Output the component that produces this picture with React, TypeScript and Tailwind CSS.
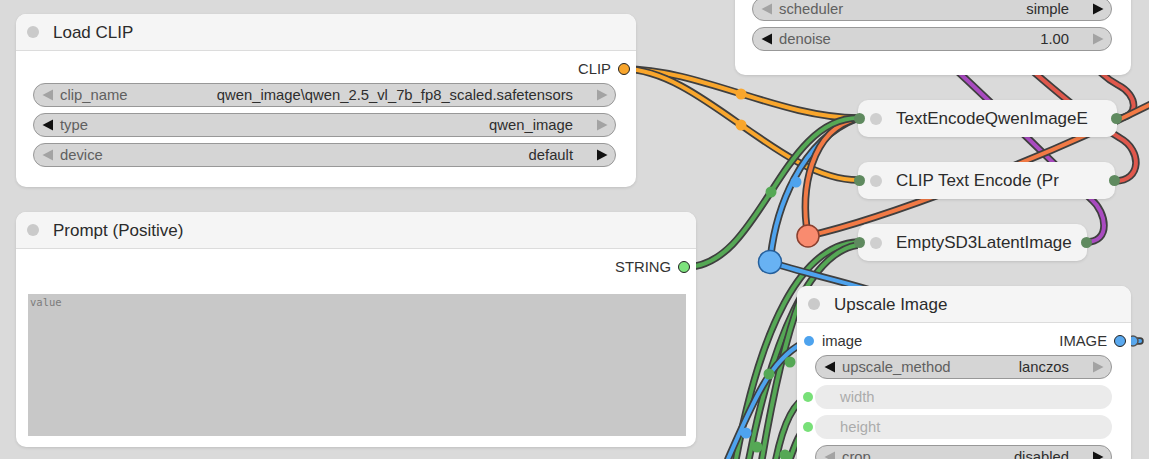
import React from "react";

const FONT = "font-['Liberation_Sans',Arial,sans-serif]";

function Tri({ dir, active }: { dir: "l" | "r"; active: boolean }) {
  return (
    <svg width="12" height="12" viewBox="0 0 12 12" className="shrink-0">
      {dir === "l" ? (
        <polygon points="11,0.5 11,11.5 0.5,6" fill={active ? "#111111" : "#a3a3a3"} />
      ) : (
        <polygon points="1,0.5 1,11.5 11.5,6" fill={active ? "#111111" : "#a3a3a3"} />
      )}
    </svg>
  );
}

function Combo({ label, value, l, r }: { label: string; value: string; l: boolean; r: boolean }) {
  return (
    <div className="flex h-[24px] items-center rounded-full border border-[#989898] bg-[#d5d5d5] pl-[8px] pr-[7px] text-[14.8px] leading-none">
      <Tri dir="l" active={l} />
      <span className="ml-[6px] text-[#606060]">{label}</span>
      <span className="ml-auto text-[#2e2e2e]">{value}</span>
      <span className="ml-[23px]">
        <Tri dir="r" active={r} />
      </span>
    </div>
  );
}

function Header({ title }: { title: string }) {
  return (
    <div className="flex h-[37px] items-center border-b border-[#dcdcdc] bg-[#f5f5f5] pl-[11px]">
      <div className="h-[12px] w-[12px] rounded-full bg-[#cacaca]" />
      <div className="ml-[14px] pt-[2px] text-[17px] text-[#2b2b2b]">{title}</div>
    </div>
  );
}

function OutRow({ label, color }: { label: string; color: string }) {
  return (
    <div className="flex h-[20px] items-center justify-end pr-[6px] text-[14.8px] text-[#333]">
      <span>{label}</span>
      <span
        className="ml-[7px] h-[12px] w-[12px] rounded-full border-[1.5px] border-[#222]"
        style={{ background: color }}
      />
    </div>
  );
}

function Collapsed({ title, w, top }: { title: string; w: string; top: string }) {
  return (
    <div
      className={`absolute left-[858px] ${top} ${w} h-[37px] rounded-[10px] bg-[#f4f4f4] shadow-[0_1px_3px_rgba(0,0,0,0.12)]`}
    >
      <div className="flex h-full items-center overflow-hidden pl-[12px]">
        <div className="h-[12px] w-[12px] shrink-0 rounded-full bg-[#cfcfcf]" />
        <div className="ml-[14px] whitespace-nowrap pt-[1px] text-[17px] text-[#2b2b2b]">{title}</div>
      </div>
      <div className="absolute left-[-4px] top-[13px] h-[11px] w-[11px] rounded-full bg-[#5f8a5f]" />
      <div className="absolute right-[-5px] top-[13px] h-[11px] w-[11px] rounded-full bg-[#5f8a5f]" />
    </div>
  );
}

const wires: { d: string; c: string }[] = [
  // purple latent
  { d: "M1086,242 C1112,242 1106,212 1092,200 C1060,170 1000,110 940,55", c: "#a94bc0" },
  // red conditioning
  { d: "M1115,181 C1142,181 1142,150 1120,138 C1090,120 1060,95 1020,60", c: "#e0584c" },
  { d: "M1117,118 C1140,118 1138,95 1118,85 C1105,78 1100,72 1090,60", c: "#e0584c" },
  // salmon line to the right
  { d: "M808,236 C880,220 1040,160 1149,105", c: "#f27a45" },
  // orange CLIP
  { d: "M624,69 C700,69 780,118 858,118", c: "#f9a62c" },
  { d: "M624,69 C700,69 780,180 858,180", c: "#f9a62c" },
  // green lines from bottom
  { d: "M736,459 C760,330 800,245 858,242", c: "#55a855" },
  { d: "M749,459 C772,340 810,252 858,245", c: "#55a855" },
  { d: "M762,459 C772,400 785,340 800,300", c: "#55a855" },
  { d: "M776,459 C782,430 792,402 808,397", c: "#55a855" },
  { d: "M790,459 C795,445 800,430 808,427", c: "#55a855" },
  // blue
  { d: "M728,459 C750,410 770,355 808,341", c: "#4ea3ee" },
  { d: "M770,262 C800,272 830,278 870,290", c: "#4ea3ee" },
  { d: "M770,262 C775,210 800,140 858,118", c: "#4ea3ee" },
  { d: "M1120,341 L1140,341", c: "#4ea3ee" },
  // salmon up
  { d: "M808,236 C800,190 810,130 858,118", c: "#f27a45" },
  // green STRING
  { d: "M686,267 C760,267 780,118 858,118", c: "#55a855" },
];

const dots: { x: number; y: number; c: string }[] = [
  { x: 741, y: 94, c: "#f9a62c" },
  { x: 741, y: 125, c: "#f9a62c" },
  { x: 771, y: 192, c: "#55a855" },
  { x: 796, y: 182, c: "#4ea3ee" },
  { x: 769, y: 374, c: "#55a855" },
  { x: 790, y: 362, c: "#55a855" },
  { x: 746, y: 433, c: "#4ea3ee" },
  { x: 757, y: 447, c: "#55a855" },
  { x: 785, y: 455, c: "#55a855" },
];

export default function App() {
  return (
    <div className={`relative h-[459px] w-[1149px] overflow-hidden bg-[#dadada] ${FONT}`}>
      <svg className="absolute left-0 top-0" width="1149" height="459">
        {wires.map((w, i) => (
          <g key={i}>
            <path d={w.d} stroke="#3f3f3f" strokeWidth={7.5} fill="none" strokeLinecap="round" />
            <path d={w.d} stroke={w.c} strokeWidth={4} fill="none" strokeLinecap="round" />
          </g>
        ))}
        {dots.map((p, i) => (
          <circle key={i} cx={p.x} cy={p.y} r={5.5} fill={p.c} />
        ))}
        <circle cx={1133} cy={341} r={5} fill="#5aa9ef" stroke="#555" strokeWidth={1.5} />
        <circle cx={808} cy={236} r={11} fill="#f98b6f" stroke="#8a3f2e" strokeWidth={1.5} />
        <circle cx={770} cy={262} r={11.5} fill="#68b2f3" stroke="#245f9c" strokeWidth={1.5} />
      </svg>

      {/* Load CLIP */}
      <div className="absolute left-[16px] top-[14px] w-[620px] overflow-hidden rounded-[10px] bg-white shadow-[0_1px_3px_rgba(0,0,0,0.12)]">
        <Header title="Load CLIP" />
        <div className="pb-[20px] pt-[8px]">
          <OutRow label="CLIP" color="#f8a52c" />
          <div className="ml-[17px] mr-[20px] mt-[4px] flex flex-col gap-[6px]">
            <Combo label="clip_name" value="qwen_image\qwen_2.5_vl_7b_fp8_scaled.safetensors" l={false} r={false} />
            <Combo label="type" value="qwen_image" l={true} r={false} />
            <Combo label="device" value="default" l={false} r={true} />
          </div>
        </div>
      </div>

      {/* Prompt */}
      <div className="absolute left-[16px] top-[212px] flex h-[235px] w-[680px] flex-col overflow-hidden rounded-[10px] bg-white shadow-[0_1px_3px_rgba(0,0,0,0.12)]">
        <Header title="Prompt (Positive)" />
        <div className="flex flex-1 flex-col pb-[11px] pt-[8px]">
          <OutRow label="STRING" color="#7de27d" />
          <div className="ml-[12px] mr-[10px] mt-[17px] flex-1 bg-[#c8c8c8] px-[2px] pt-[1px] font-['DejaVu_Sans_Mono',monospace] text-[10.5px] leading-[14px] text-[#7c7c7c]">
            value
          </div>
        </div>
      </div>

      {/* KSampler (partial) */}
      <div className="absolute left-[735px] top-[-50px] h-[125px] w-[396px] rounded-[10px] bg-white shadow-[0_1px_3px_rgba(0,0,0,0.12)]">
        <div className="ml-[17px] mr-[19px] mt-[47px] flex flex-col gap-[6px]">
          <Combo label="scheduler" value="simple" l={false} r={true} />
          <Combo label="denoise" value="1.00" l={true} r={false} />
        </div>
      </div>

      <Collapsed title="TextEncodeQwenImageE" w="w-[259px]" top="top-[100px]" />
      <Collapsed title="CLIP Text Encode (Pr" w="w-[257px]" top="top-[162px]" />
      <Collapsed title="EmptySD3LatentImage" w="w-[229px]" top="top-[224px]" />

      {/* Upscale Image */}
      <div className="absolute left-[797px] top-[286px] h-[220px] w-[334px] rounded-[10px] bg-white shadow-[0_1px_3px_rgba(0,0,0,0.12)]">
        <div className="overflow-hidden rounded-t-[10px]">
          <Header title="Upscale Image" />
        </div>
        <div className="pt-[8px]">
          <div className="flex h-[20px] items-center pl-[7px] pr-[5px] text-[14.8px] text-[#333]">
            <span className="h-[10px] w-[10px] rounded-full bg-[#4ea3ee]" />
            <span className="ml-[8px]">image</span>
            <span className="ml-auto">IMAGE</span>
            <span className="ml-[7px] h-[12px] w-[12px] rounded-full border-[1.5px] border-[#222] bg-[#5aa9ef]" />
          </div>
          <div className="ml-[18px] mr-[19px] mt-[4px] flex flex-col gap-[6px]">
            <Combo label="upscale_method" value="lanczos" l={true} r={false} />
            <div className="relative flex h-[24px] items-center rounded-full bg-[#ebebeb] pl-[25px] text-[14.8px] text-[#ababab]">
              <span className="absolute left-[-12px] top-[7px] h-[10px] w-[10px] rounded-full bg-[#78e078]" />
              width
            </div>
            <div className="relative flex h-[24px] items-center rounded-full bg-[#ebebeb] pl-[25px] text-[14.8px] text-[#ababab]">
              <span className="absolute left-[-12px] top-[7px] h-[10px] w-[10px] rounded-full bg-[#78e078]" />
              height
            </div>
            <Combo label="crop" value="disabled" l={false} r={true} />
          </div>
        </div>
      </div>
    </div>
  );
}
